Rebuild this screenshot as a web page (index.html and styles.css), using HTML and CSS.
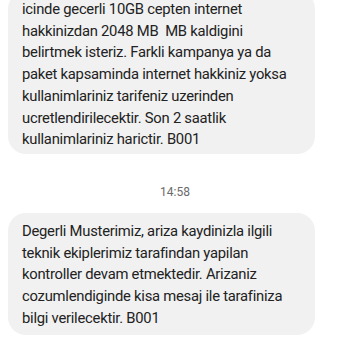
FILE: index.html
```html
<!DOCTYPE html>
<html lang="tr">
<head>
    <meta charset="UTF-8">
    <meta name="viewport" content="width=device-width, initial-scale=1.0">
    <title>Mesajlar</title>
    <link rel="stylesheet" href="styles.css">
</head>
<body>
    <div class="thread">
        <!-- onceki mesaj -->
        <div class="bubble first">
            <p>icinde gecerli 10GB cepten internet<br>hakkinizdan 2048 MB&nbsp; MB kaldigini<br>belirtmek isteriz. Farkli kampanya ya da<br>paket kapsaminda internet hakkiniz yoksa<br>kullanimlariniz tarifeniz uzerinden<br>ucretlendirilecektir. Son 2 saatlik<br>kullanimlariniz harictir. B001</p>
        </div>

        <div class="stamp">14:58</div>

        <div class="bubble">
            <p>Degerli Musterimiz, ariza kaydinizla ilgili<br>teknik ekiplerimiz tarafindan yapilan<br>kontroller devam etmektedir. Arizaniz<br>cozumlendiginde kisa mesaj ile tarafiniza<br>bilgi verilecektir. B001</p>
        </div>

        <div class="bubble next">
            <p>&nbsp;</p>
        </div>
    </div>
</body>
</html>
```

FILE: styles.css
```css
*{
    margin: 0;
    padding: 0;
    box-sizing: border-box;
}
body{
    background: #fff;
    font-family: Roboto, "Noto Sans", sans-serif;
    color: #222;
    overflow: hidden;
}
.thread{
    display: flex;
    flex-direction: column;
    align-items: flex-start;
}
.bubble{
    width: 307px;
    margin-left: 8px;
    background: #f1f1f1;
    border-radius: 18px;
    padding: 8px 14px 6px;
}
.bubble p{
    font-size: 14.8px;
    line-height: 21.7px;
    letter-spacing: -0.25px;
    white-space: nowrap;
}
.bubble.first{
    margin-top: -9px;
    padding-bottom: 3px;
}
.bubble.next{
    width: 289px;
    margin-left: 16px;
    margin-top: 15px;
}
.stamp{
    align-self: stretch;
    text-align: center;
    font-size: 12px;
    line-height: 14px;
    color: #6b6b6b;
    margin: 31px 0 14px;
}
```
